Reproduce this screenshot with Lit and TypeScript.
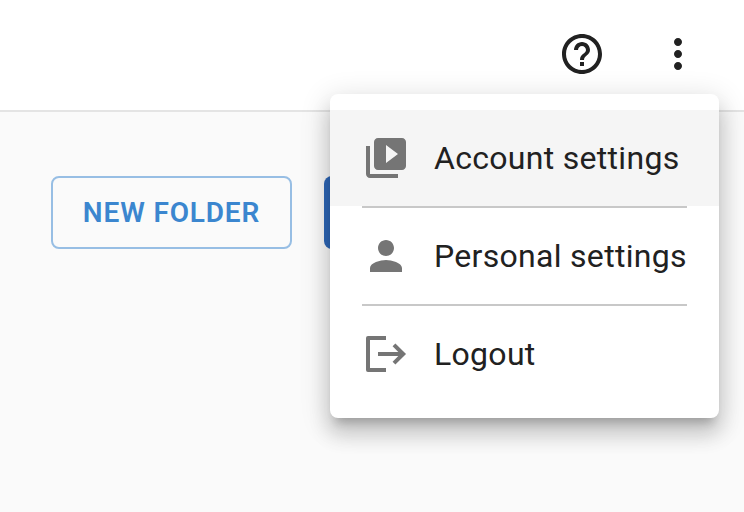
import { LitElement, html, css, svg } from "lit";
import { customElement } from "lit/decorators.js";

const icons = {
  help: svg`<path d="M11 18h2v-2h-2v2zm1-16C6.48 2 2 6.48 2 12s4.48 10 10 10 10-4.48 10-10S17.52 2 12 2zm0 18c-4.41 0-8-3.59-8-8s3.59-8 8-8 8 3.59 8 8-3.59 8-8 8zm0-14c-2.21 0-4 1.79-4 4h2c0-1.1.9-2 2-2s2 .9 2 2c0 2-3 1.75-3 5h2c0-2.25 3-2.5 3-5 0-2.21-1.79-4-4-4z"/>`,
  more: svg`<path d="M12 8c1.1 0 2-.9 2-2s-.9-2-2-2-2 .9-2 2 .9 2 2 2zm0 2c-1.1 0-2 .9-2 2s.9 2 2 2 2-.9 2-2-.9-2-2-2zm0 6c-1.1 0-2 .9-2 2s.9 2 2 2 2-.9 2-2-.9-2-2-2z"/>`,
  video: svg`<path d="M4 6H2v14c0 1.1.9 2 2 2h14v-2H4V6zm16-4H8c-1.1 0-2 .9-2 2v12c0 1.1.9 2 2 2h12c1.1 0 2-.9 2-2V4c0-1.1-.9-2-2-2zm-8 12.5v-9l6 4.5-6 4.5z"/>`,
  person: svg`<path d="M12 12c2.21 0 4-1.79 4-4s-1.79-4-4-4-4 1.79-4 4 1.79 4 4 4zm0 2c-2.67 0-8 1.34-8 4v2h16v-2c0-2.66-5.33-4-8-4z"/>`,
  logout: svg`<path d="M12 3H3a1 1 0 0 0-1 1v16a1 1 0 0 0 1 1h9v-2H4V5h8V3z"/><path d="M8 12H20.6M16 7.4l4.6 4.6-4.6 4.6" fill="none" stroke="#757575" stroke-width="2"/>`,
};

@customElement("app-root")
export class AppRoot extends LitElement {
  static styles = css`
    :host {
      display: block;
      position: relative;
      width: 744px;
      height: 512px;
      overflow: hidden;
      background: #fafafa;
      font-family: Roboto, sans-serif;
    }
    .top {
      box-sizing: border-box;
      height: 112px;
      background: #fff;
      border-bottom: 2px solid #e4e4e4;
      display: flex;
      justify-content: flex-end;
      align-items: flex-start;
      gap: 48px;
      padding: 30px 42px 0 0;
    }
    .top svg {
      width: 48px;
      height: 48px;
      fill: #212121;
      display: block;
    }
    .actions {
      display: flex;
      gap: 32px;
      padding: 64px 0 0 51px;
    }
    .btn {
      box-sizing: border-box;
      height: 73px;
      border-radius: 8px;
      font: 600 28px Roboto, sans-serif;
      letter-spacing: 0.85px;
      display: flex;
      align-items: center;
      justify-content: center;
      flex: none;
    }
    .outline {
      width: 241px;
      border: 2px solid #97bee4;
      color: #3b86cf;
    }
    .solid {
      width: 240px;
      background: #2d67b8;
    }
    .menu {
      position: absolute;
      left: 330px;
      top: 94px;
      width: 389px;
      box-sizing: border-box;
      padding: 16px 0;
      background: #fff;
      border-radius: 8px;
      box-shadow: 0 10px 10px -6px rgba(0, 0, 0, 0.2),
        0 16px 20px 2px rgba(0, 0, 0, 0.14),
        0 6px 28px 4px rgba(0, 0, 0, 0.12);
    }
    .item {
      height: 96px;
      display: flex;
      align-items: center;
      gap: 24px;
      padding-left: 32px;
      font-size: 32px;
      color: #212121;
      letter-spacing: 0.3px;
      white-space: nowrap;
    }
    .item.active {
      background: #f5f5f5;
    }
    .item svg {
      width: 48px;
      height: 48px;
      fill: #757575;
      display: block;
      flex: none;
    }
    .divider {
      height: 2px;
      margin: 0 32px;
      background: #c8c8c8;
    }
  `;

  private icon(p: unknown) {
    return html`<svg viewBox="0 0 24 24" aria-hidden="true">${p}</svg>`;
  }

  render() {
    return html`
      <header class="top">${this.icon(icons.help)}${this.icon(icons.more)}</header>
      <div class="actions">
        <div class="btn outline">NEW FOLDER</div>
        <div class="btn solid"></div>
      </div>
      <div class="menu">
        <div class="item active">${this.icon(icons.video)}<span>Account settings</span></div>
        <div class="divider"></div>
        <div class="item">${this.icon(icons.person)}<span>Personal settings</span></div>
        <div class="divider"></div>
        <div class="item">${this.icon(icons.logout)}<span>Logout</span></div>
      </div>
    `;
  }
}
